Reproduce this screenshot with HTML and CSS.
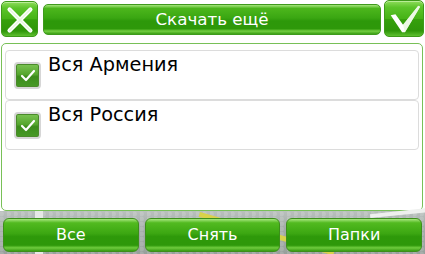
FILE: index.html
```html
<!DOCTYPE html>
<html>
<head>
<meta charset="utf-8">
<link rel="stylesheet" href="styles.css">
</head>
<body>
<div class="screen">
  <div class="top">
    <div class="sq-btn close-btn">
      <svg width="37" height="36" viewBox="0 0 37 36">
        <path d="M8 7 L30 29 M30 7 L8 29" stroke="#ffffff" stroke-width="4.5" stroke-linecap="round"/>
        <path d="M8 7 L30 29 M30 7 L8 29" stroke="#d8f3c8" stroke-width="1.5" stroke-linecap="round" opacity="0.6"/>
      </svg>
    </div>
    <div class="title">Скачать ещё</div>
    <div class="sq-btn ok-btn">
      <svg width="40" height="37" viewBox="0 0 40 37">
        <path d="M6 14 L11 13 L19 24 L35 4 L37 5 L21 32 L18 32 Z" fill="#ffffff"/>
        <path d="M19 24 L35 4 L37 5 L21 32 Z" fill="#e4f5da" opacity="0.7"/>
      </svg>
    </div>
  </div>
  <div class="panel">
    <div class="row">
      <span class="cb">
        <svg width="21" height="21" viewBox="0 0 21 21">
          <path d="M5 11 L9 15 L17 6" stroke="#ffffff" stroke-width="2.2" fill="none" stroke-linecap="round" stroke-linejoin="round"/>
        </svg>
      </span>
      <span class="label">Вся Армения</span>
    </div>
    <div class="row">
      <span class="cb">
        <svg width="21" height="21" viewBox="0 0 21 21">
          <path d="M5 11 L9 15 L17 6" stroke="#ffffff" stroke-width="2.2" fill="none" stroke-linecap="round" stroke-linejoin="round"/>
        </svg>
      </span>
      <span class="label">Вся Россия</span>
    </div>
  </div>
  <div class="bottom">
    <div class="stripe-y"></div>
    <div class="stripe-w"></div>
    <div class="stripe-w2"></div>
    <div class="btn">Все</div>
    <div class="btn">Снять</div>
    <div class="btn">Папки</div>
  </div>
</div>
</body>
</html>
```
FILE: styles.css
```css
html, body {
  margin: 0;
  padding: 0;
  background: #ffffff;
}
.screen {
  width: 425px;
  height: 254px;
  overflow: hidden;
  font-family: "DejaVu Sans", "Liberation Sans", sans-serif;
  background: #ffffff;
  display: flex;
  flex-direction: column;
}
.top {
  height: 43px;
  display: flex;
  align-items: flex-start;
}
.sq-btn {
  box-sizing: border-box;
  border: 1px solid #3e9a1a;
  border-radius: 5px;
  background: linear-gradient(180deg, #8fdc5c 0%, #5cc42a 18%, #46b316 50%, #36a00c 52%, #2f960a 85%, #5ec030 100%);
  box-shadow: inset 0 1px 0 #b8ec95;
  display: flex;
}
.close-btn {
  width: 37px;
  height: 36px;
  margin: 1px 0 0 1px;
}
.ok-btn {
  width: 40px;
  height: 37px;
  margin-left: 3px;
}
.title {
  box-sizing: border-box;
  width: 338px;
  height: 31px;
  margin: 4px 0 0 5px;
  border: 1px solid #3f9a1d;
  border-radius: 5px;
  background: linear-gradient(180deg, #a5e57c 0%, #4cb61c 12%, #3aa612 45%, #2d980a 55%, #2e980a 82%, #74cf42 90%, #3a9f14 100%);
  color: #ffffff;
  font-size: 16.7px;
  display: flex;
  align-items: center;
  justify-content: center;
  padding-bottom: 1px;
}
.panel {
  box-sizing: border-box;
  height: 168px;
  margin: 0 2px 0 1px;
  border: 1px solid #78c057;
  border-radius: 5px;
  background: #ffffff;
  padding: 6px 3px 0 3px;
  display: flex;
  flex-direction: column;
}
.row {
  box-sizing: border-box;
  height: 50px;
  border: 1px solid #dcdcdc;
  border-radius: 4px;
  display: flex;
  align-items: flex-start;
}
.cb {
  box-sizing: border-box;
  width: 27px;
  height: 27px;
  margin: 11px 0 0 8px;
  border: 2px solid #d6d6d6;
  border-radius: 4px;
  background: linear-gradient(180deg, #7cc454 0%, #55a62e 45%, #3c8c1c 55%, #479a26 100%);
  box-shadow: inset 0 0 0 1px #4a8a2a;
  display: flex;
  align-items: center;
  justify-content: center;
}
.label {
  margin: 3px 0 0 7px;
  font-size: 19.3px;
  color: #000000;
  line-height: 22px;
}
.bottom {
  position: relative;
  flex: 1;
  display: flex;
  align-items: flex-start;
  gap: 6px;
  padding: 7px 3px 0 3px;
  background:
    radial-gradient(circle at 20% 60%, rgba(255,255,255,0.15) 0 2px, transparent 3px) 0 0 / 7px 5px,
    linear-gradient(180deg, #b9c0bd 0%, #a3aba8 40%, #98a09c 100%);
}
.stripe-y {
  position: absolute;
  left: 200px;
  top: 1px;
  width: 140px;
  height: 5px;
  background: #d8d24a;
  transform: rotate(16deg);
  transform-origin: left top;
}
.stripe-w {
  position: absolute;
  left: 35px;
  top: 0;
  width: 8px;
  height: 43px;
  background: #e6e8e6;
}
.stripe-w2 {
  position: absolute;
  left: 370px;
  top: 0;
  width: 60px;
  height: 4px;
  background: #eef0ee;
  transform: rotate(-6deg);
}
.btn {
  position: relative;
  box-sizing: border-box;
  flex: 1;
  height: 34px;
  border: 1px solid #3c8f1a;
  border-radius: 6px;
  background: linear-gradient(180deg, #a8e67f 0%, #52ba20 12%, #3ca712 45%, #2e990a 55%, #2e980a 82%, #6fcc3e 90%, #389c12 100%);
  color: #ffffff;
  font-size: 16px;
  display: flex;
  align-items: center;
  justify-content: center;
  padding-bottom: 1px;
}
```
